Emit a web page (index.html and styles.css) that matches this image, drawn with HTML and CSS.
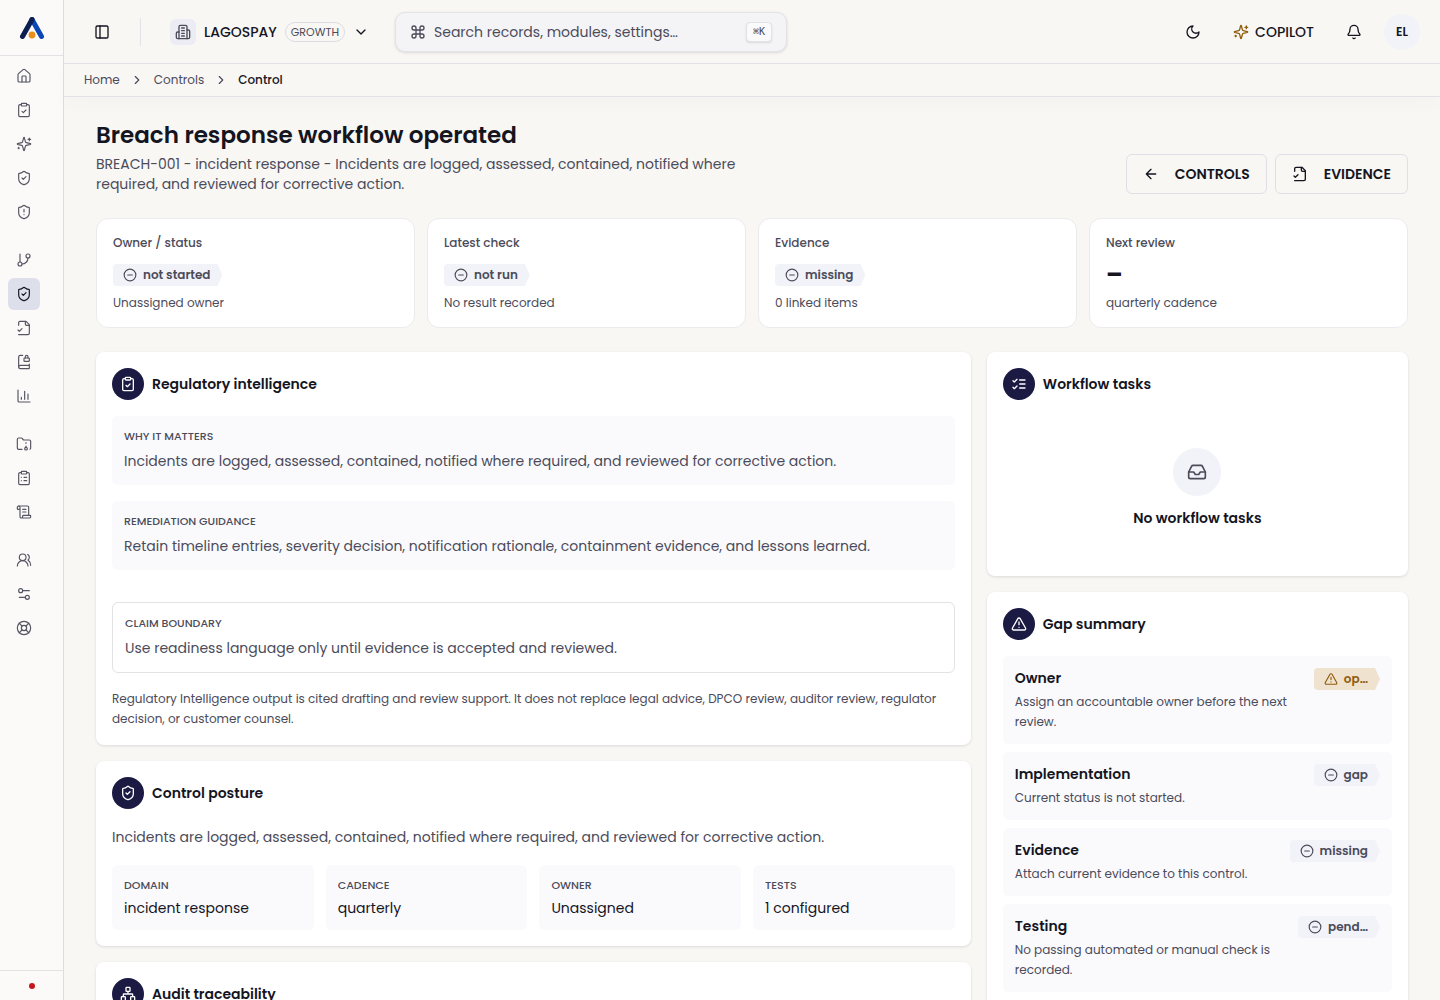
FILE: index.html
```
<!DOCTYPE html>
<html lang="en">
<head>
  <meta charset="UTF-8">
  <meta name="viewport" content="width=device-width, initial-scale=1.0">
  <title>Breach response workflow operated</title>
  <link rel="stylesheet" href="styles.css">
</head>
<body>
  <!-- Icon sprite -->
  <svg class="sprite" aria-hidden="true">
    <symbol id="home" viewBox="0 0 24 24"><path d="M15 21v-8a1 1 0 0 0-1-1h-4a1 1 0 0 0-1 1v8"/><path d="M3 10a2 2 0 0 1 .709-1.528l7-6a2 2 0 0 1 2.582 0l7 6A2 2 0 0 1 21 10v9a2 2 0 0 1-2 2H5a2 2 0 0 1-2-2z"/></symbol>
    <symbol id="clipboard-check" viewBox="0 0 24 24"><rect x="8" y="2" width="8" height="4" rx="1"/><path d="M16 4h2a2 2 0 0 1 2 2v14a2 2 0 0 1-2 2H6a2 2 0 0 1-2-2V6a2 2 0 0 1 2-2h2"/><path d="m9 14 2 2 4-4"/></symbol>
    <symbol id="clipboard-list" viewBox="0 0 24 24"><rect x="8" y="2" width="8" height="4" rx="1"/><path d="M16 4h2a2 2 0 0 1 2 2v14a2 2 0 0 1-2 2H6a2 2 0 0 1-2-2V6a2 2 0 0 1 2-2h2"/><path d="M12 11h4M12 16h4M8 11h.01M8 16h.01"/></symbol>
    <symbol id="sparkles" viewBox="0 0 24 24"><path d="M9.937 15.5A2 2 0 0 0 8.5 14.063l-6.135-1.582a.5.5 0 0 1 0-.962L8.5 9.936A2 2 0 0 0 9.937 8.5l1.582-6.135a.5.5 0 0 1 .963 0L14.063 8.5A2 2 0 0 0 15.5 9.937l6.135 1.581a.5.5 0 0 1 0 .964L15.5 14.063a2 2 0 0 0-1.437 1.437l-1.582 6.135a.5.5 0 0 1-.963 0z"/><path d="M20 3v4M22 5h-4M4 17v2M5 18H3"/></symbol>
    <symbol id="shield-check" viewBox="0 0 24 24"><path d="M20 13c0 5-3.5 7.5-7.66 8.95a1 1 0 0 1-.67-.01C7.5 20.5 4 18 4 13V6a1 1 0 0 1 1-1c2 0 4.500-1.200 6.240-2.720a1.170 1.170 0 0 1 1.520 0C14.510 3.810 17 5 19 5a1 1 0 0 1 1 1z"/><path d="m9 12 2 2 4-4"/></symbol>
    <symbol id="shield-alert" viewBox="0 0 24 24"><path d="M20 13c0 5-3.5 7.5-7.66 8.950a1 1 0 0 1-.67-.01C7.5 20.5 4 18 4 13V6a1 1 0 0 1 1-1c2 0 4.500-1.200 6.240-2.720a1.170 1.170 0 0 1 1.520 0C14.510 3.810 17 5 19 5a1 1 0 0 1 1 1z"/><path d="M12 8v4M12 16h.01"/></symbol>
    <symbol id="branch" viewBox="0 0 24 24"><path d="M6 3v12"/><circle cx="18" cy="6" r="3"/><circle cx="6" cy="18" r="3"/><path d="M18 9a9 9 0 0 1-9 9"/></symbol>
    <symbol id="file-check" viewBox="0 0 24 24"><path d="M4 22h14a2 2 0 0 0 2-2V7l-5-5H6a2 2 0 0 0-2 2v4"/><path d="M14 2v4a2 2 0 0 0 2 2h4"/><path d="m3 15 2 2 4-4"/></symbol>
    <symbol id="book-lock" viewBox="0 0 24 24"><path d="M18 6V4a2 2 0 1 0-4 0v2"/><path d="M20 15v6a1 1 0 0 1-1 1H6.5a1 1 0 0 1 0-5H20"/><path d="M4 19.500v-15A2.500 2.500 0 0 1 6.500 2H10"/><rect x="12" y="6" width="8" height="5" rx="1"/></symbol>
    <symbol id="chart" viewBox="0 0 24 24"><path d="M3 3v16a2 2 0 0 0 2 2h16"/><path d="M18 17V9M13 17V5M8 17v-3"/></symbol>
    <symbol id="folder-archive" viewBox="0 0 24 24"><circle cx="15" cy="19" r="2"/><path d="M20.900 19.800A2 2 0 0 0 22 18V8a2 2 0 0 0-2-2h-7.900a2 2 0 0 1-1.690-.900L9.600 3.900A2 2 0 0 0 7.930 3H4a2 2 0 0 0-2 2v13a2 2 0 0 0 2 2h5.100"/><path d="M15 11v-1M15 17v-2"/></symbol>
    <symbol id="scroll" viewBox="0 0 24 24"><path d="M15 12h-5M15 8h-5M19 17V5a2 2 0 0 0-2-2H4"/><path d="M8 21h12a2 2 0 0 0 2-2v-1a1 1 0 0 0-1-1H11a1 1 0 0 0-1 1v1a2 2 0 1 1-4 0V5a2 2 0 1 0-4 0v2a1 1 0 0 0 1 1h3"/></symbol>
    <symbol id="users" viewBox="0 0 24 24"><path d="M18 21a8 8 0 0 0-16 0"/><circle cx="10" cy="8" r="5"/><path d="M22 20c0-3.370-2-6.500-4-8a5 5 0 0 0-.450-8.300"/></symbol>
    <symbol id="settings" viewBox="0 0 24 24"><path d="M20 7h-9M14 17H5"/><circle cx="17" cy="17" r="3"/><circle cx="7" cy="7" r="3"/></symbol>
    <symbol id="lifebuoy" viewBox="0 0 24 24"><circle cx="12" cy="12" r="10"/><path d="m4.930 4.930 4.240 4.240M14.830 9.170l4.240-4.240M14.830 14.830l4.240 4.240M9.170 14.830l-4.240 4.240"/><circle cx="12" cy="12" r="4"/></symbol>
    <symbol id="panel" viewBox="0 0 24 24"><rect x="3" y="3" width="18" height="18" rx="2"/><path d="M9 3v18"/></symbol>
    <symbol id="building" viewBox="0 0 24 24"><path d="M6 22V4a2 2 0 0 1 2-2h8a2 2 0 0 1 2 2v18Z"/><path d="M6 12H4a2 2 0 0 0-2 2v6a2 2 0 0 0 2 2h2M18 9h2a2 2 0 0 1 2 2v9a2 2 0 0 1-2 2h-2M10 6h4M10 10h4M10 14h4M10 18h4"/></symbol>
    <symbol id="chevron-down" viewBox="0 0 24 24"><path d="m6 9 6 6 6-6"/></symbol>
    <symbol id="chevron-right" viewBox="0 0 24 24"><path d="m9 18 6-6-6-6"/></symbol>
    <symbol id="command" viewBox="0 0 24 24"><path d="M15 6v12a3 3 0 1 0 3-3H6a3 3 0 1 0 3 3V6a3 3 0 1 0-3 3h12a3 3 0 1 0-3-3"/></symbol>
    <symbol id="moon" viewBox="0 0 24 24"><path d="M12 3a6 6 0 0 0 9 9 9 9 0 1 1-9-9Z"/></symbol>
    <symbol id="bell" viewBox="0 0 24 24"><path d="M10.268 21a2 2 0 0 0 3.464 0"/><path d="M3.262 15.326A1 1 0 0 0 4 17h16a1 1 0 0 0 .740-1.673C19.410 13.956 18 12.499 18 8A6 6 0 0 0 6 8c0 4.499-1.411 5.956-2.738 7.326"/></symbol>
    <symbol id="arrow-left" viewBox="0 0 24 24"><path d="m12 19-7-7 7-7M19 12H5"/></symbol>
    <symbol id="circle-minus" viewBox="0 0 24 24"><circle cx="12" cy="12" r="10"/><path d="M8 12h8"/></symbol>
    <symbol id="triangle" viewBox="0 0 24 24"><path d="m21.730 18-8-14a2 2 0 0 0-3.480 0l-8 14A2 2 0 0 0 4 21h16a2 2 0 0 0 1.730-3"/><path d="M12 9v4M12 17h.01"/></symbol>
    <symbol id="list-checks" viewBox="0 0 24 24"><path d="m3 17 2 2 4-4M3 7l2 2 4-4M13 6h8M13 12h8M13 18h8"/></symbol>
    <symbol id="inbox" viewBox="0 0 24 24"><path d="M22 12h-6l-2 3h-4l-2-3H2"/><path d="M5.450 5.110 2 12v6a2 2 0 0 0 2 2h16a2 2 0 0 0 2-2v-6l-3.450-6.890A2 2 0 0 0 16.760 4H7.240a2 2 0 0 0-1.790 1.110z"/></symbol>
    <symbol id="network" viewBox="0 0 24 24"><rect x="16" y="16" width="6" height="6" rx="1"/><rect x="2" y="16" width="6" height="6" rx="1"/><rect x="9" y="2" width="6" height="6" rx="1"/><path d="M5 16v-3a1 1 0 0 1 1-1h12a1 1 0 0 1 1 1v3M12 12V8"/></symbol>
  </svg>

  <div class="app">
    <aside class="sidebar">
      <a class="logo" href="#" aria-label="Dashboard">
        <svg viewBox="0 0 26 24">
          <path d="M13 3.500 22.500 20.500" stroke="#0b47b5"/>
          <path d="M13 3.500 3.500 20.500" stroke="#0b1f52"/>
          <circle cx="13" cy="19" r="3.400"/>
        </svg>
      </a>
      <nav class="side-nav" aria-label="Main">
        <div class="nav-group">
          <a href="#" aria-label="Home"><svg class="icon"><use href="#home"/></svg></a>
          <a href="#" aria-label="Tasks"><svg class="icon"><use href="#clipboard-check"/></svg></a>
          <a href="#" aria-label="Copilot"><svg class="icon"><use href="#sparkles"/></svg></a>
          <a href="#" aria-label="Compliance"><svg class="icon"><use href="#shield-check"/></svg></a>
          <a href="#" aria-label="Risks"><svg class="icon"><use href="#shield-alert"/></svg></a>
        </div>
        <div class="nav-group">
          <a href="#" aria-label="Workflows"><svg class="icon"><use href="#branch"/></svg></a>
          <a href="#" class="active" aria-label="Controls" aria-current="page"><svg class="icon"><use href="#shield-check"/></svg></a>
          <a href="#" aria-label="Evidence"><svg class="icon"><use href="#file-check"/></svg></a>
          <a href="#" aria-label="Policies"><svg class="icon"><use href="#book-lock"/></svg></a>
          <a href="#" aria-label="Reports"><svg class="icon"><use href="#chart"/></svg></a>
        </div>
        <div class="nav-group">
          <a href="#" aria-label="Archive"><svg class="icon"><use href="#folder-archive"/></svg></a>
          <a href="#" aria-label="Audits"><svg class="icon"><use href="#clipboard-list"/></svg></a>
          <a href="#" aria-label="Log"><svg class="icon"><use href="#scroll"/></svg></a>
        </div>
        <div class="nav-group">
          <a href="#" aria-label="Team"><svg class="icon"><use href="#users"/></svg></a>
          <a href="#" aria-label="Settings"><svg class="icon"><use href="#settings"/></svg></a>
          <a href="#" aria-label="Support"><svg class="icon"><use href="#lifebuoy"/></svg></a>
        </div>
      </nav>
      <div class="side-footer"><span class="status-dot"></span></div>
    </aside>

    <div class="main">
      <header class="topbar">
        <button type="button" class="icon-btn" aria-label="Toggle sidebar"><svg class="icon"><use href="#panel"/></svg></button>
        <span class="divider"></span>
        <button type="button" class="org">
          <span class="org-icon"><svg class="icon"><use href="#building"/></svg></span>
          <span class="org-name">LAGOSPAY</span>
          <span class="plan">GROWTH</span>
          <svg class="icon"><use href="#chevron-down"/></svg>
        </button>
        <label class="search">
          <svg class="icon"><use href="#command"/></svg>
          <input type="text" placeholder="Search records, modules, settings…" aria-label="Search">
          <kbd>⌘K</kbd>
        </label>
        <div class="top-actions">
          <button type="button" class="icon-btn" aria-label="Dark mode"><svg class="icon"><use href="#moon"/></svg></button>
          <button type="button" class="copilot"><svg class="icon"><use href="#sparkles"/></svg>COPILOT</button>
          <button type="button" class="icon-btn" aria-label="Notifications"><svg class="icon"><use href="#bell"/></svg></button>
          <button type="button" class="avatar">EL</button>
        </div>
      </header>
      <nav class="breadcrumbs" aria-label="Breadcrumb">
        <a href="#">Home</a>
        <svg class="icon"><use href="#chevron-right"/></svg>
        <a href="#">Controls</a>
        <svg class="icon"><use href="#chevron-right"/></svg>
        <span aria-current="page">Control</span>
      </nav>

      <main class="content">
        <div class="page-head">
          <div class="page-title">
            <h1>Breach response workflow operated</h1>
            <p>BREACH-001 - incident response - Incidents are logged, assessed, contained, notified where required, and reviewed for corrective action.</p>
          </div>
          <div class="page-actions">
            <a class="btn" href="#"><svg class="icon"><use href="#arrow-left"/></svg>CONTROLS</a>
            <a class="btn" href="#"><svg class="icon"><use href="#file-check"/></svg>EVIDENCE</a>
          </div>
        </div>

        <section class="stats">
          <div class="stat">
            <h3>Owner / status</h3>
            <div class="stat-value"><span class="badge"><svg class="icon"><use href="#circle-minus"/></svg>not started</span></div>
            <p>Unassigned owner</p>
          </div>
          <div class="stat">
            <h3>Latest check</h3>
            <div class="stat-value"><span class="badge"><svg class="icon"><use href="#circle-minus"/></svg>not run</span></div>
            <p>No result recorded</p>
          </div>
          <div class="stat">
            <h3>Evidence</h3>
            <div class="stat-value"><span class="badge"><svg class="icon"><use href="#circle-minus"/></svg>missing</span></div>
            <p>0 linked items</p>
          </div>
          <div class="stat">
            <h3>Next review</h3>
            <div class="stat-value"><strong>–</strong></div>
            <p>quarterly cadence</p>
          </div>
        </section>

        <div class="columns">
          <div class="column">
            <section class="card">
              <h2><span class="card-icon"><svg class="icon"><use href="#clipboard-check"/></svg></span>Regulatory intelligence</h2>
              <div class="panel">
                <h4>WHY IT MATTERS</h4>
                <p>Incidents are logged, assessed, contained, notified where required, and reviewed for corrective action.</p>
              </div>
              <div class="panel">
                <h4>REMEDIATION GUIDANCE</h4>
                <p>Retain timeline entries, severity decision, notification rationale, containment evidence, and lessons learned.</p>
              </div>
              <div class="panel outlined">
                <h4>CLAIM BOUNDARY</h4>
                <p>Use readiness language only until evidence is accepted and reviewed.</p>
              </div>
              <p class="note">Regulatory Intelligence output is cited drafting and review support. It does not replace legal advice, DPCO review, auditor review, regulator decision, or customer counsel.</p>
            </section>

            <section class="card">
              <h2><span class="card-icon"><svg class="icon"><use href="#shield-check"/></svg></span>Control posture</h2>
              <p>Incidents are logged, assessed, contained, notified where required, and reviewed for corrective action.</p>
              <div class="facts">
                <div class="panel fact"><h4>DOMAIN</h4><p>incident response</p></div>
                <div class="panel fact"><h4>CADENCE</h4><p>quarterly</p></div>
                <div class="panel fact"><h4>OWNER</h4><p>Unassigned</p></div>
                <div class="panel fact"><h4>TESTS</h4><p>1 configured</p></div>
              </div>
            </section>

            <section class="card">
              <h2><span class="card-icon"><svg class="icon"><use href="#network"/></svg></span>Audit traceability</h2>
            </section>
          </div>

          <div class="column">
            <section class="card">
              <h2><span class="card-icon"><svg class="icon"><use href="#list-checks"/></svg></span>Workflow tasks</h2>
              <div class="empty">
                <span class="empty-icon"><svg class="icon"><use href="#inbox"/></svg></span>
                <strong>No workflow tasks</strong>
              </div>
            </section>

            <section class="card">
              <h2><span class="card-icon"><svg class="icon"><use href="#triangle"/></svg></span>Gap summary</h2>
              <ul class="gaps">
                <li>
                  <div><h3>Owner</h3><p>Assign an accountable owner before the next review.</p></div>
                  <span class="badge warning"><svg class="icon"><use href="#triangle"/></svg>op…</span>
                </li>
                <li>
                  <div><h3>Implementation</h3><p>Current status is not started.</p></div>
                  <span class="badge"><svg class="icon"><use href="#circle-minus"/></svg>gap</span>
                </li>
                <li>
                  <div><h3>Evidence</h3><p>Attach current evidence to this control.</p></div>
                  <span class="badge"><svg class="icon"><use href="#circle-minus"/></svg>missing</span>
                </li>
                <li>
                  <div><h3>Testing</h3><p>No passing automated or manual check is recorded.</p></div>
                  <span class="badge"><svg class="icon"><use href="#circle-minus"/></svg>pend…</span>
                </li>
              </ul>
            </section>
          </div>
        </div>
      </main>
    </div>
  </div>
</body>
</html>
```
FILE: styles.css
```
:root {
  --bg: #f8f7f4;
  --surface: #ffffff;
  --panel: #fafafd;
  --soft: #f2f3f9;
  --line: #e2e2e7;
  --text: #15151f;
  --muted: #4b4b5a;
  --navy: #1a1a43;
  --amber: #8f5c0c;
}

* {
  margin: 0;
  padding: 0;
  box-sizing: border-box;
}

body {
  font-family: Poppins, Inter, sans-serif;
  font-size: 14px;
  line-height: 20px;
  color: var(--text);
  background: var(--bg);
}

a {
  color: inherit;
  text-decoration: none;
}

button {
  font: inherit;
  color: inherit;
  background: none;
  border: none;
  cursor: pointer;
}

.sprite {
  display: none;
}

.icon {
  width: 16px;
  height: 16px;
  flex-shrink: 0;
  fill: none;
  stroke: currentColor;
  stroke-width: 2;
  stroke-linecap: round;
  stroke-linejoin: round;
}

.app {
  display: flex;
  height: 100vh;
  overflow: hidden;
}

/* Sidebar */
.sidebar {
  display: flex;
  flex-direction: column;
  width: 64px;
  flex-shrink: 0;
  background: #fbfaf8;
  border-right: 1px solid #dcdce2;
}

.logo {
  display: flex;
  align-items: center;
  justify-content: center;
  height: 56px;
  border-bottom: 1px solid var(--line);
}

.logo svg {
  width: 26px;
  height: 24px;
  fill: #e8901f;
  stroke-width: 5;
  stroke-linecap: round;
}

.side-nav {
  flex: 1;
  display: flex;
  flex-direction: column;
  gap: 16px;
  padding: 4px 8px;
}

.nav-group {
  display: flex;
  flex-direction: column;
  gap: 2px;
}

.nav-group a {
  display: flex;
  align-items: center;
  justify-content: center;
  width: 32px;
  height: 32px;
  border-radius: 6px;
  color: #555563;
}

.nav-group .icon {
  stroke-width: 1.75;
}

.nav-group a.active {
  background: #dddfea;
  color: var(--text);
}

.side-footer {
  display: flex;
  align-items: center;
  justify-content: center;
  height: 30px;
  border-top: 1px solid var(--line);
}

.status-dot {
  width: 6px;
  height: 6px;
  border-radius: 50%;
  background: #c4161c;
}

/* Top bar */
.main {
  flex: 1;
  min-width: 0;
  display: flex;
  flex-direction: column;
}

.topbar {
  display: flex;
  align-items: center;
  height: 64px;
  flex-shrink: 0;
  padding: 0 20px;
  border-bottom: 1px solid var(--line);
}

.icon-btn {
  display: flex;
  align-items: center;
  justify-content: center;
  width: 36px;
  height: 36px;
}

.divider {
  width: 1px;
  height: 28px;
  margin: 0 29px 0 20px;
  background: var(--line);
}

.org {
  display: flex;
  align-items: center;
  gap: 8px;
}

.org-icon {
  display: flex;
  align-items: center;
  justify-content: center;
  width: 26px;
  height: 26px;
  border-radius: 6px;
  background: #ecedf4;
  color: var(--muted);
}

.org-name {
  font-weight: 500;
}

.plan {
  padding: 0 5px;
  border: 1px solid #dcdce2;
  border-radius: 10px;
  font-size: 11px;
  line-height: 18px;
  color: var(--muted);
}

.search {
  display: flex;
  align-items: center;
  gap: 8px;
  width: 392px;
  height: 40px;
  margin-left: 26px;
  padding: 0 14px;
  border: 1px solid var(--line);
  border-radius: 10px;
  background: #f4f4f6;
  box-shadow: 0 1px 3px rgba(20, 20, 50, 0.12);
  color: var(--muted);
}

.search input {
  flex: 1;
  min-width: 0;
  font: inherit;
  color: var(--text);
  background: none;
  border: none;
  outline: none;
}

.search input::placeholder {
  color: var(--muted);
  opacity: 1;
}

.search kbd {
  padding: 0 6px;
  border: 1px solid var(--line);
  border-radius: 4px;
  background: #fafafa;
  box-shadow: 0 1px 2px rgba(20, 20, 50, 0.12);
  font-family: "DejaVu Sans Mono", monospace;
  font-size: 10px;
  line-height: 18px;
}

.top-actions {
  display: flex;
  align-items: center;
  gap: 12px;
  margin-left: auto;
}

.copilot {
  display: flex;
  align-items: center;
  gap: 6px;
  padding: 0 10px;
  font-weight: 500;
}

.copilot .icon {
  color: var(--amber);
}

.avatar {
  width: 36px;
  height: 36px;
  border-radius: 50%;
  background: var(--soft);
  font-size: 12px;
  font-weight: 600;
}

.breadcrumbs {
  display: flex;
  align-items: center;
  gap: 10px;
  height: 33px;
  flex-shrink: 0;
  padding: 0 20px;
  border-bottom: 1px solid var(--line);
  box-shadow: 0 8px 20px rgba(20, 20, 50, 0.02);
  font-size: 12px;
  color: var(--muted);
}

.breadcrumbs .icon {
  width: 14px;
  height: 14px;
}

.breadcrumbs [aria-current] {
  font-weight: 500;
  color: var(--text);
}

/* Page */
.content {
  flex: 1;
  min-height: 0;
  padding: 24px 32px;
  overflow-y: auto;
  scrollbar-width: none;
}

.page-head {
  display: flex;
  align-items: flex-end;
  justify-content: space-between;
  gap: 24px;
  margin-bottom: 24px;
}

.page-title {
  max-width: 672px;
}

h1 {
  margin-bottom: 4px;
  font-size: 23px;
  line-height: 29px;
  font-weight: 600;
}

.page-title p {
  color: var(--muted);
}

.page-actions {
  display: flex;
  gap: 8px;
}

.btn {
  display: flex;
  align-items: center;
  gap: 16px;
  height: 40px;
  padding: 0 16px;
  border: 1px solid #dfdfe8;
  border-radius: 6px;
  font-weight: 600;
}

.stats {
  display: grid;
  grid-template-columns: repeat(4, minmax(0, 1fr));
  gap: 12px;
  margin-bottom: 24px;
}

.stat {
  padding: 16px;
  border: 1px solid #ebebef;
  border-radius: 12px;
  background: var(--surface);
  font-size: 12px;
  line-height: 16px;
  color: var(--muted);
}

.stat h3 {
  font-size: 12px;
  font-weight: 500;
}

.stat-value {
  display: flex;
  align-items: center;
  height: 32px;
  margin: 8px 0 4px;
}

.stat-value strong {
  font-size: 24px;
  color: var(--text);
}

/* Pointed status tag */
.badge {
  display: inline-flex;
  align-items: center;
  gap: 6px;
  height: 22px;
  flex-shrink: 0;
  padding: 0 12px 0 10px;
  border-radius: 4px 0 0 4px;
  background: var(--soft);
  clip-path: polygon(0 0, calc(100% - 5px) 0, 100% 50%, calc(100% - 5px) 100%, 0 100%);
  font-size: 12px;
  font-weight: 600;
  color: var(--muted);
}

.badge .icon {
  width: 14px;
  height: 14px;
}

.badge.warning {
  background: #efe2cf;
  color: var(--amber);
}

.columns {
  display: grid;
  grid-template-columns: minmax(0, 135fr) minmax(0, 65fr);
  gap: 16px;
}

.column {
  display: flex;
  flex-direction: column;
  gap: 16px;
}

.card {
  display: flex;
  flex-direction: column;
  gap: 16px;
  padding: 16px;
  border-radius: 8px;
  background: var(--surface);
  box-shadow: 0 1px 3px rgba(20, 20, 50, 0.12);
}

.card h2 {
  display: flex;
  align-items: center;
  gap: 8px;
  font-size: 14px;
  font-weight: 600;
}

.card-icon {
  display: flex;
  align-items: center;
  justify-content: center;
  width: 32px;
  height: 32px;
  border-radius: 50%;
  background: var(--navy);
  color: #ffffff;
}

.card p {
  line-height: 24px;
  color: var(--muted);
}

.panel {
  padding: 12px;
  border-radius: 6px;
  background: var(--panel);
}

.panel h4 {
  margin-bottom: 4px;
  font-size: 11px;
  line-height: 17px;
  font-weight: 500;
  color: var(--muted);
}

.panel.outlined {
  margin-top: 16px;
  border: 1px solid var(--line);
  background: var(--surface);
}

.card .note {
  font-size: 12px;
  line-height: 20px;
}

.facts {
  display: grid;
  grid-template-columns: repeat(4, minmax(0, 1fr));
  gap: 12px;
}

.card .fact p {
  line-height: 20px;
  color: var(--text);
}

.empty {
  display: flex;
  flex-direction: column;
  align-items: center;
  gap: 12px;
  padding: 32px;
}

.empty strong {
  font-weight: 600;
}

.empty-icon {
  display: flex;
  align-items: center;
  justify-content: center;
  width: 48px;
  height: 48px;
  border-radius: 50%;
  background: var(--soft);
  color: var(--muted);
}

.empty-icon .icon {
  width: 20px;
  height: 20px;
}

.gaps {
  display: flex;
  flex-direction: column;
  gap: 8px;
  list-style: none;
}

.gaps li {
  display: flex;
  align-items: flex-start;
  justify-content: space-between;
  gap: 12px;
  padding: 12px;
  border-radius: 6px;
  background: var(--panel);
}

.gaps h3 {
  margin-bottom: 4px;
  font-size: 14px;
  font-weight: 600;
}

.gaps p {
  font-size: 12px;
  line-height: 20px;
}
```
